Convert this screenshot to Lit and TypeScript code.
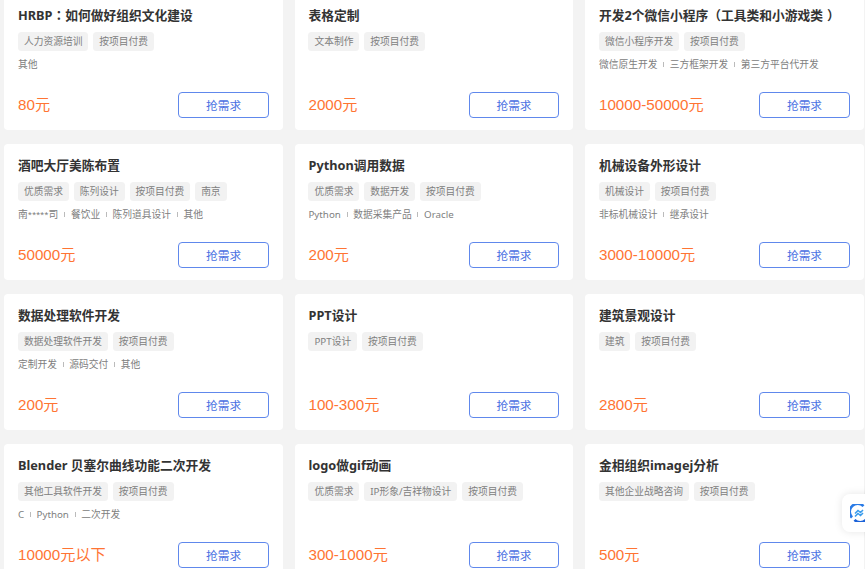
import { LitElement, html, css } from "lit";
import { customElement } from "lit/decorators.js";

interface Item { title: string; tags: string[]; info: string[]; price: string; }

const items: Item[] = [
  { title: "HRBP：如何做好组织文化建设", tags: ["人力资源培训", "按项目付费"], info: ["其他"], price: "80元" },
  { title: "表格定制", tags: ["文本制作", "按项目付费"], info: [], price: "2000元" },
  { title: "开发2个微信小程序（工具类和小游戏类）", tags: ["微信小程序开发", "按项目付费"], info: ["微信原生开发", "三方框架开发", "第三方平台代开发"], price: "10000-50000元" },
  { title: "酒吧大厅美陈布置", tags: ["优质需求", "陈列设计", "按项目付费", "南京"], info: ["南*****司", "餐饮业", "陈列道具设计", "其他"], price: "50000元" },
  { title: "Python调用数据", tags: ["优质需求", "数据开发", "按项目付费"], info: ["Python", "数据采集产品", "Oracle"], price: "200元" },
  { title: "机械设备外形设计", tags: ["机械设计", "按项目付费"], info: ["非标机械设计", "继承设计"], price: "3000-10000元" },
  { title: "数据处理软件开发", tags: ["数据处理软件开发", "按项目付费"], info: ["定制开发", "源码交付", "其他"], price: "200元" },
  { title: "PPT设计", tags: ["PPT设计", "按项目付费"], info: [], price: "100-300元" },
  { title: "建筑景观设计", tags: ["建筑", "按项目付费"], info: [], price: "2800元" },
  { title: "Blender 贝塞尔曲线功能二次开发", tags: ["其他工具软件开发", "按项目付费"], info: ["C", "Python", "二次开发"], price: "10000元以下" },
  { title: "logo做gif动画", tags: ["优质需求", "IP形象/吉祥物设计", "按项目付费"], info: [], price: "300-1000元" },
  { title: "金相组织imagej分析", tags: ["其他企业战略咨询", "按项目付费"], info: [], price: "500元" },
];

@customElement("app-root")
export class AppRoot extends LitElement {
  static styles = css`
    :host {
      display: block;
      position: relative;
      height: 569px;
      overflow: hidden;
      background: #f3f3f3;
      font-family: "Noto Sans", "Noto Sans CJK SC", sans-serif;
    }
    .grid {
      display: grid;
      grid-template-columns: repeat(3, 278.6px);
      grid-auto-rows: 136px;
      column-gap: 11.9px;
      row-gap: 14px;
      margin: -6px 0 0 4.3px;
    }
    .card {
      display: flex;
      flex-direction: column;
      box-sizing: border-box;
      padding: 11px 14px 12px 13.7px;
      background: #fff;
      border-radius: 4px;
    }
    .title {
      height: 20px;
      line-height: 20px;
      font-size: 12.75px;
      font-weight: 700;
      color: #333;
      white-space: nowrap;
    }
    .colon {
      font-family: "Noto Sans CJK TC", sans-serif;
    }
    .close {
      display: inline-block;
      transform: translateX(4px);
    }
    .tags {
      display: flex;
      gap: 4.8px;
      margin-top: 7px;
    }
    .tag {
      height: 19px;
      line-height: 19px;
      padding: 0 6px;
      background: #f2f2f2;
      border-radius: 3.5px;
      font-size: 9.75px;
      color: #808080;
      white-space: nowrap;
    }
    .info {
      display: flex;
      align-items: center;
      gap: 5.7px;
      height: 16px;
      margin-top: 5.4px;
      font-size: 9.75px;
      color: #808080;
      white-space: nowrap;
    }
    .mask {
      font-family: "Liberation Sans", "Noto Sans CJK SC", sans-serif;
      letter-spacing: 0.3px;
    }
    .sep {
      width: 1px;
      height: 5px;
      background: #bbb;
    }
    .bottom {
      display: flex;
      align-items: center;
      justify-content: space-between;
      margin-top: auto;
    }
    .price {
      font-family: "Liberation Sans", "Noto Sans CJK SC", sans-serif;
      font-size: 15.2px;
      color: #ff7433;
      margin-bottom: 4px;
    }
    .btn {
      box-sizing: border-box;
      width: 90.7px;
      height: 25.6px;
      padding-top: 1px;
      line-height: 23px;
      border: 1.2px solid #6088ec;
      border-radius: 4px;
      background: #fff;
      text-align: center;
      font-size: 11.7px;
      color: #4a70e2;
    }
    .float {
      position: absolute;
      left: 842px;
      top: 494px;
      width: 40px;
      height: 38px;
      display: flex;
      align-items: center;
      padding-left: 8px;
      box-sizing: border-box;
      background: #fff;
      border-radius: 8px;
      box-shadow: 0 0 8px rgba(0, 0, 0, 0.1);
    }
    .float svg {
      width: 18px;
      height: 18px;
      flex: none;
    }
  `;

  private titleParts(t: string) {
    return t.split(/([：）])/).map((p) => {
      if (p === "：") return html`<span class="colon">${p}</span>`;
      if (p === "）") return html`<span class="close">${p}</span>`;
      return p;
    });
  }

  private card(it: Item) {
    return html`<div class="card">
      <div class="title">${this.titleParts(it.title)}</div>
      <div class="tags">${it.tags.map((t) => html`<span class="tag">${t}</span>`)}</div>
      <div class="info">
        ${it.info.map(
          (t, i) =>
            html`${i > 0 ? html`<span class="sep"></span>` : ""}<span class=${t.includes("*") ? "mask" : ""}>${t}</span>`
        )}
      </div>
      <div class="bottom">
        <span class="price">${it.price}</span>
        <div class="btn">抢需求</div>
      </div>
    </div>`;
  }

  render() {
    return html`<div class="grid">${items.map((it) => this.card(it))}</div>
      <div class="float">
        <svg viewBox="0 0 18 18" fill="none">
          <path d="M2 13.5A8 8 0 0 1 13.5 2.2" stroke="#2a7be6" stroke-width="2.6" />
          <path d="M16 4.5A8 8 0 0 1 4.5 15.8" stroke="#1b62d8" stroke-width="2.6" />
          <path d="M5 9.5l3-3 2.5 2 2.5-2.5M5 12.5l3-3 2.5 2 2.5-2.5" stroke="#3a9cec" stroke-width="1.6" />
        </svg>
      </div>`;
  }
}
